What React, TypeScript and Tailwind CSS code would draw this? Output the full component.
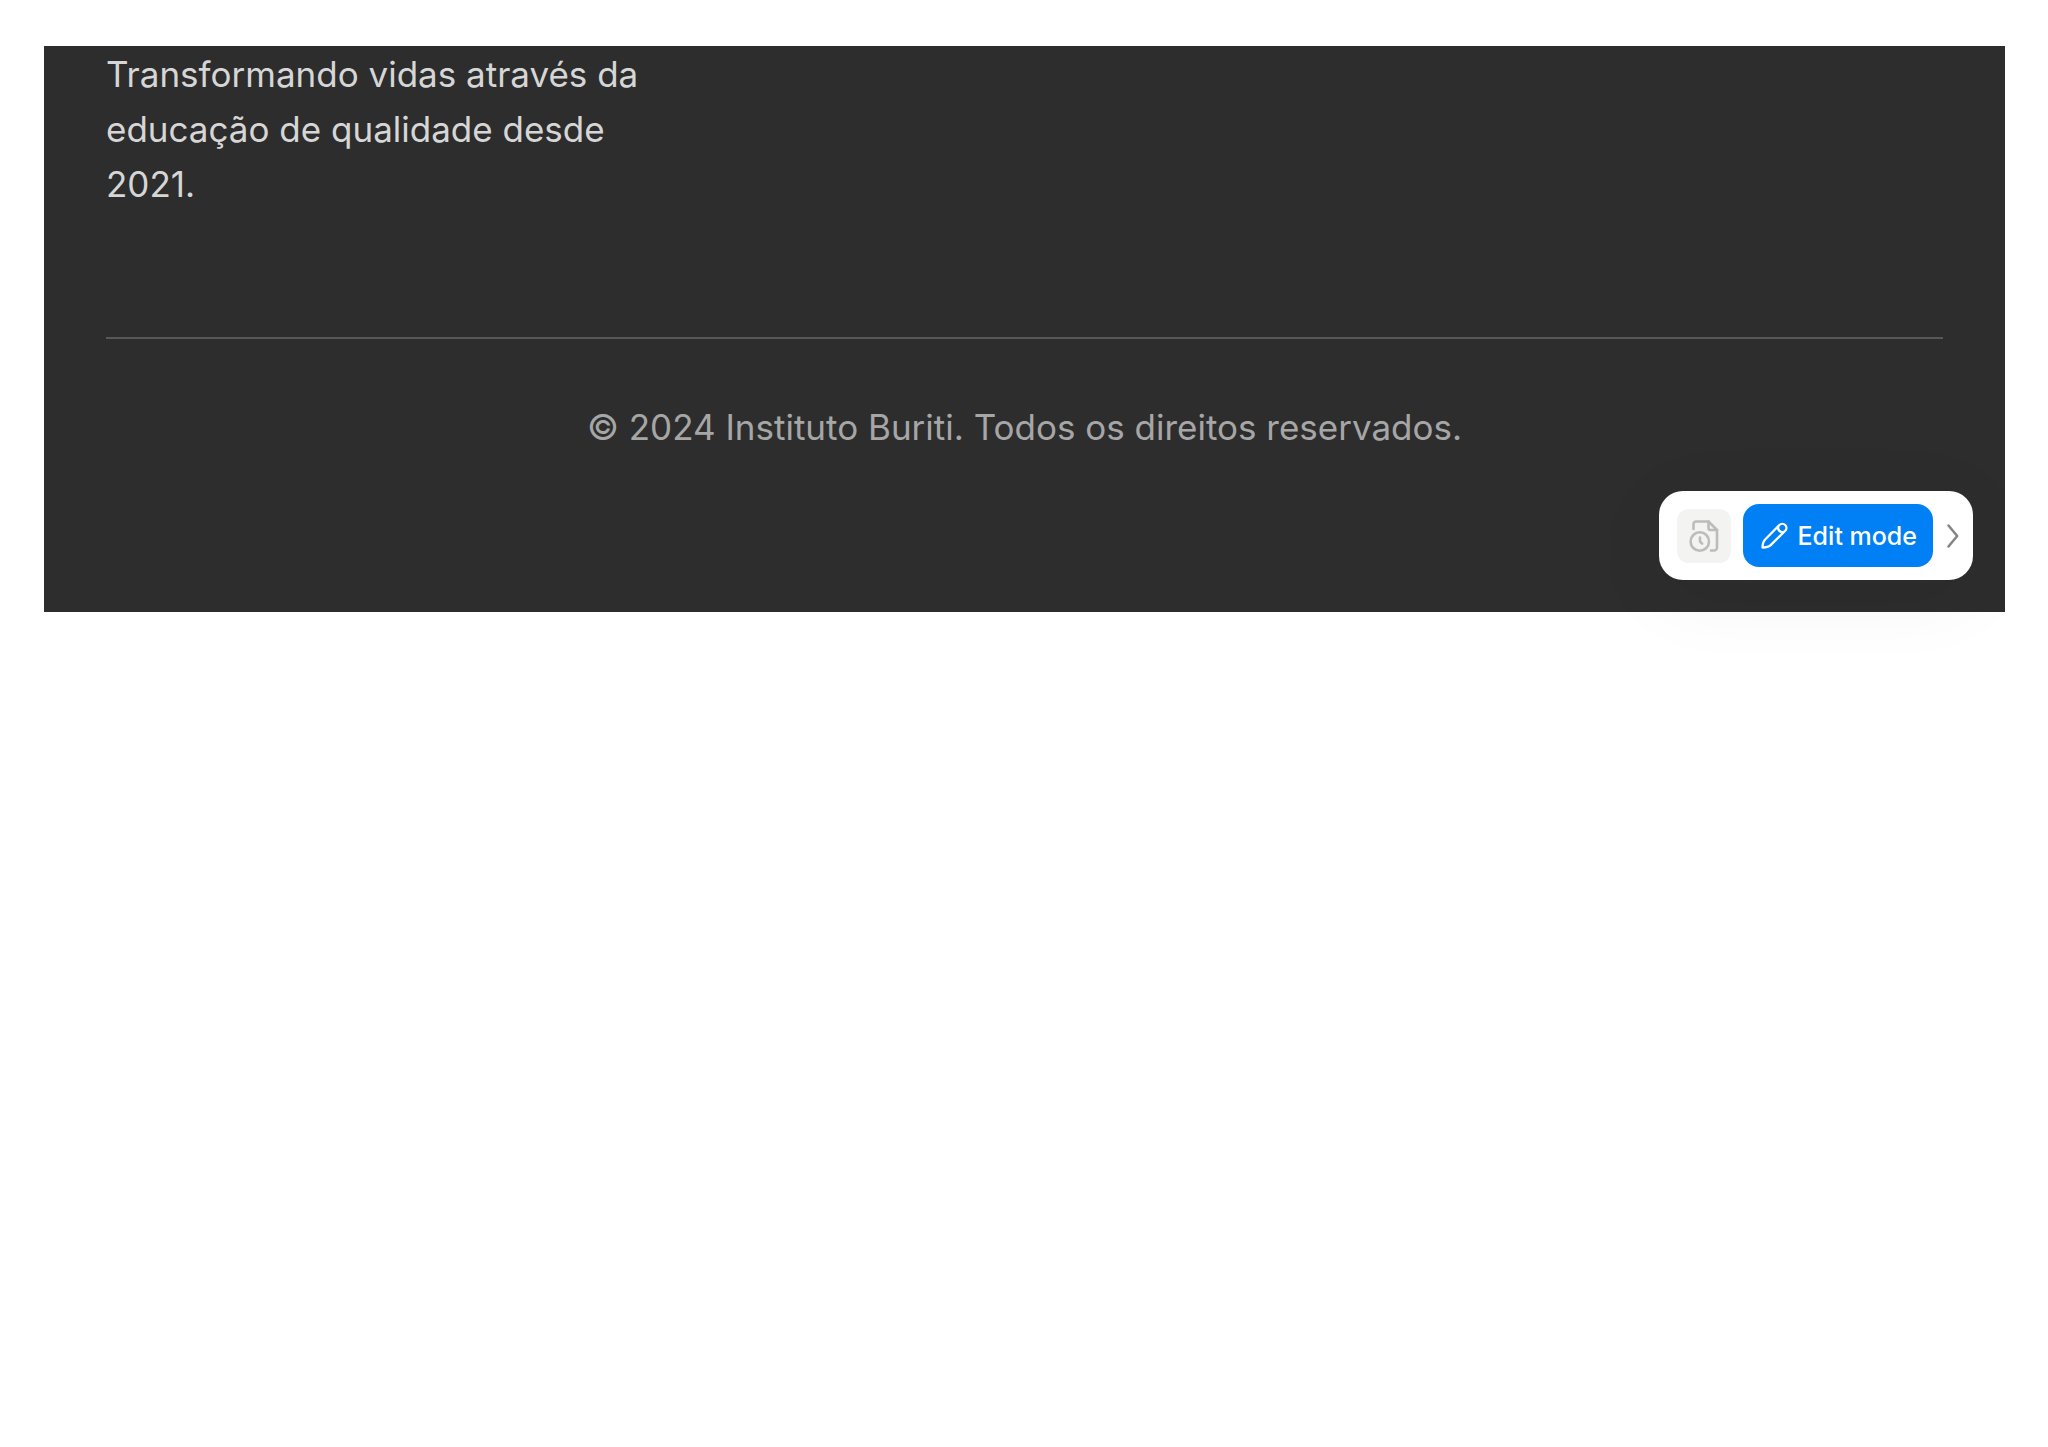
function HistoryIcon() {
  return (
    <svg viewBox="0 0 30 32" className="h-8 w-[30px]" fill="none" stroke="#bcbcba" strokeWidth="2.6" strokeLinecap="round" strokeLinejoin="round" aria-hidden="true">
      <path d="M4.500 9V4a2.500 2.500 0 0 1 2.500-2.500h12.500L28 10v17.500a3 3 0 0 1-3 3h-3" />
      <path d="M19.500 1.500V8a2 2 0 0 0 2 2H28" />
      <circle cx="10.800" cy="21.500" r="9.200" />
      <path d="M11 17.500v4l2.200 2.200" />
    </svg>
  );
}

function PencilIcon() {
  return (
    <svg viewBox="0 0 27 27" className="h-[27px] w-[27px]" fill="none" stroke="#fff" strokeWidth="2.3" strokeLinejoin="round" aria-hidden="true">
      <path d="M1.500 25.500c.1-3 .6-6 2.400-7.800L18.400 3a4.100 4.100 0 0 1 5.800 5.800L9.400 23.400c-1.900 1.800-4.900 2.100-7.900 2.100z" />
      <path d="M17.600 4a4.300 4.300 0 0 0 5.600 5.800" />
    </svg>
  );
}

function EditToolbar() {
  return (
    <div className="absolute right-8 bottom-8 flex items-center rounded-3xl bg-white py-[13px] pr-3 pl-[18px] shadow-[0_16px_80px_rgba(0,0,0,0.06)]">
      <button type="button" aria-label="Version history" className="flex size-[54px] items-center justify-center rounded-xl bg-[#f3f3f2]">
        <HistoryIcon />
      </button>
      <button type="button" className="ml-3 flex h-[63px] items-center gap-[10px] rounded-2xl bg-[#0080f4] pr-4 pl-[18px] text-[25px] leading-8 font-medium text-white">
        <PencilIcon />
        <span>Edit mode</span>
      </button>
      <button type="button" aria-label="Collapse toolbar" className="ml-3 flex h-[54px] w-4 items-center justify-center">
        <svg viewBox="0 0 12 26" className="h-[26px] w-3" fill="none" stroke="#858585" strokeWidth="2.5" strokeLinecap="round" strokeLinejoin="round" aria-hidden="true">
          <path d="M1.500 2.500l8.700 10.500-8.700 10.500" />
        </svg>
      </button>
    </div>
  );
}

export default function App() {
  return (
    <div className="min-h-screen bg-white pt-[46px] pr-[43px] pl-11 font-['Inter',sans-serif]">
      <div className="overflow-hidden pb-16">
        <footer className="relative bg-[#2d2d2d] px-[62px] pt-px pb-[157px]">
          <p className="max-w-[560px] pb-[125px] text-[35px] leading-[55px] text-[#d6d6d6]">
            Transformando vidas através da educação de qualidade desde 2021.
          </p>
          <div className="border-t-2 border-[#585858] pt-[61px] text-center">
            <p className="text-[35px] leading-[55px] text-[#a6a6a6]">
              © 2024 Instituto Buriti. Todos os direitos reservados.
            </p>
          </div>
          <EditToolbar />
        </footer>
      </div>
    </div>
  );
}
